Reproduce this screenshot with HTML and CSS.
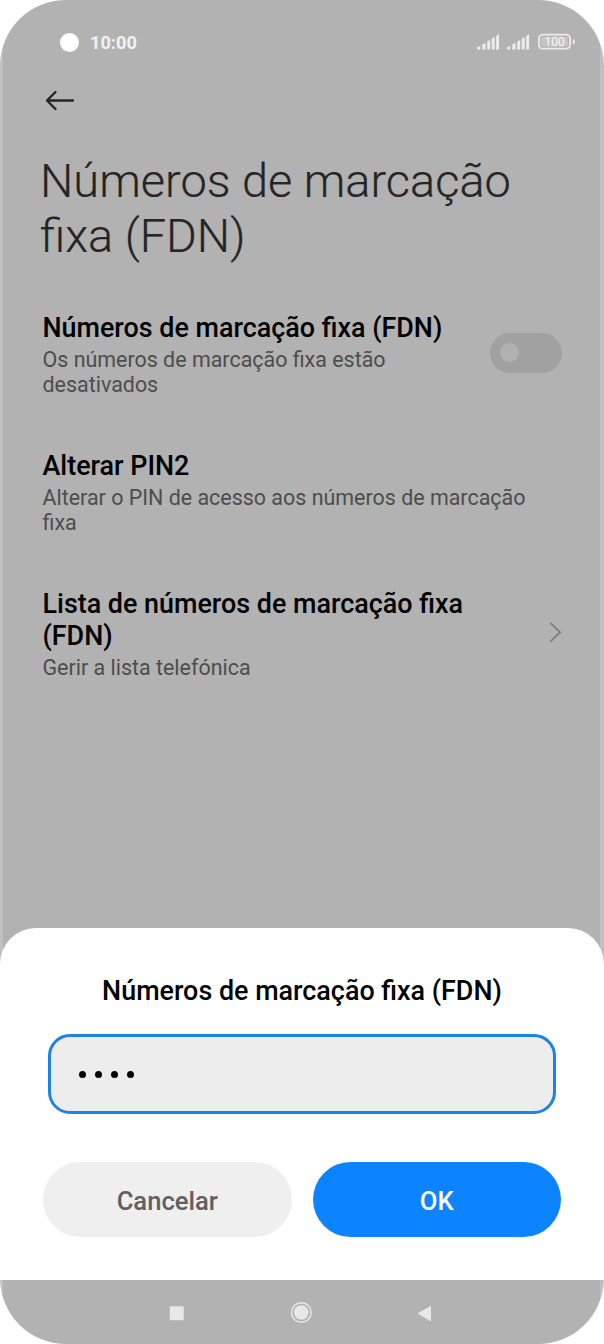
FILE: index.html
```html
<!DOCTYPE html>
<html lang="pt">
<head>
<meta charset="utf-8">
<title>Números de marcação fixa (FDN)</title>
<link rel="stylesheet" href="styles.css">
</head>
<body>
<div class="phone">
  <header class="status">
    <span class="camera"></span>
    <span class="time">10:00</span>
    <svg class="signals" width="100" height="20" viewBox="0 0 100 20" fill="#ececec">
      <path id="signal" d="M1 17.500v-2l3.200-1.500v3.500zM6.300 17.500v-5l3.200-1.700v6.700zM11.200 17.500v-8l3-1.600v9.600zM15.700 17.500v-11l3-1.600v12.600zM20.100 17.500v-13.500l3-2v15.500z"/>
      <use href="#signal" x="30"/>
      <rect x="62.900" y="2.700" width="31.200" height="14" rx="4" fill="none" stroke="#ececec" stroke-width="1.800"/>
      <rect x="65" y="4.800" width="27" height="9.800" rx="2" fill="#c4c4c4"/>
      <path d="M96.800 7q2 .4 2 2.800t-2 2.800z"/>
      <text class="charge" x="78.600" y="14" text-anchor="middle">100</text>
    </svg>
  </header>
  <svg class="back" width="32" height="24" viewBox="0 0 32 24" fill="none" stroke="#252525" stroke-width="2.300" stroke-linecap="round" stroke-linejoin="round"><path d="M29 12.500H3M11.500 4L3 12.500L11.500 21"/></svg>
  <h1 class="title">Números de marcação<br>fixa (FDN)</h1>
  <main class="settings">
    <section class="item">
      <div class="copy">
        <h2>Números de marcação fixa (FDN)</h2>
        <p>Os números de marcação fixa estão<br>desativados</p>
      </div>
      <span class="toggle"><span class="knob"></span></span>
    </section>
    <section class="item">
      <div class="copy">
        <h2>Alterar PIN2</h2>
        <p>Alterar o PIN de acesso aos números de marcação<br>fixa</p>
      </div>
    </section>
    <section class="item">
      <div class="copy">
        <h2>Lista de números de marcação fixa<br>(FDN)</h2>
        <p>Gerir a lista telefónica</p>
      </div>
      <svg class="chevron" width="14" height="22" viewBox="0 0 14 22" fill="none" stroke="#808080" stroke-width="2"><path d="M2.500 2L12 11.300L2.500 20.600"/></svg>
    </section>
  </main>
  <div class="dialog">
    <h2 class="dialog-title">Números de marcação fixa (FDN)</h2>
    <div class="pin"><i></i><i></i><i></i><i></i></div>
    <div class="actions">
      <button class="button">Cancelar</button>
      <button class="button primary">OK</button>
    </div>
  </div>
  <nav class="navbar">
    <svg width="604" height="64" viewBox="0 0 604 64" fill="#e8e8e8">
      <rect x="169.800" y="26.300" width="13.900" height="13.900"/>
      <circle cx="301.300" cy="32.500" r="9.800" fill="none" stroke="#e8e8e8" stroke-width="1.500"/>
      <circle cx="301.300" cy="32.500" r="7.300"/>
      <path d="M417.500 33.500L431 25.700V41.500z"/>
    </svg>
  </nav>
</div>
</body>
</html>
```
FILE: styles.css
```css
* { box-sizing: border-box; }
body { margin: 0; background: #fff; font-family: Roboto, sans-serif; }
h1, h2, p { margin: 0; }
.phone {
  width: 604px;
  height: 1344px;
  overflow: hidden;
  display: flex;
  flex-direction: column;
  border-radius: 66px;
  background: linear-gradient(90deg, #c0c0c0 3px, #b2b2b2 3px, #b2b2b2 600px, #bfc0c2 600px);
}
.status {
  height: 84px;
  flex: none;
  display: flex;
  align-items: center;
  padding: 0 28px 0 60px;
}
.camera { width: 19px; height: 19px; border-radius: 50%; background: #fff; }
.time { margin: 0 0 0 11px; font-size: 18.2px; font-weight: 700; color: #f2f2f2; }
.signals { margin-left: auto; }
.charge { font-size: 12px; font-weight: 400; fill: #f8f8f8; }
.back { flex: none; margin: 4px 0 0 44px; }
.title {
  flex: none;
  margin: 41px 0 0 40px;
  font-size: 46.95px;
  font-weight: 300;
  line-height: 55px;
  color: #252525;
  -webkit-text-stroke: 0.2px #252525;
}
.settings {
  display: flex;
  flex-direction: column;
  gap: 53px;
  padding: 49px 42px 0;
}
.item { display: flex; justify-content: space-between; align-items: center; white-space: nowrap; }
.copy { padding-left: 0.5px; }
.item h2 { font-size: 26.9px; font-weight: 500; line-height: 32px; color: #000; }
.item p { margin-top: 3px; font-size: 21.45px; line-height: 25px; color: #4d4d4d; }
.toggle {
  width: 72px;
  height: 40px;
  margin-top: -4px;
  display: flex;
  align-items: center;
  padding-left: 10px;
  border-radius: 20px;
  background: #a1a1a1;
}
.knob { width: 19px; height: 19px; border-radius: 50%; background: #b1b1b1; }
.chevron { margin-top: -4px; }
.dialog {
  height: 352px;
  flex: none;
  margin-top: auto;
  padding: 47px 43px 0;
  border-radius: 36px 36px 0 0;
  background: #fff;
}
.dialog-title { font-size: 26.9px; font-weight: 500; line-height: 32px; text-align: center; }
.pin {
  height: 80px;
  margin: 27px 5px 0;
  display: flex;
  align-items: center;
  gap: 9px;
  padding: 1px 28px 0;
  border: 3px solid #1b83ea;
  border-radius: 22px;
  background: #ededed;
}
.pin i { width: 7px; height: 7px; border-radius: 50%; background: #000; }
.actions { margin-top: 48px; display: flex; gap: 21px; }
.button {
  flex: 1;
  height: 75px;
  padding: 3px 0 0;
  border: 0;
  border-radius: 38px;
  background: #efefef;
  color: #606060;
  font: 500 25.6px Roboto, sans-serif;
}
.primary { background: #0d84ff; color: #fff; }
.navbar { height: 64px; flex: none; }
.navbar svg { display: block; }
```
